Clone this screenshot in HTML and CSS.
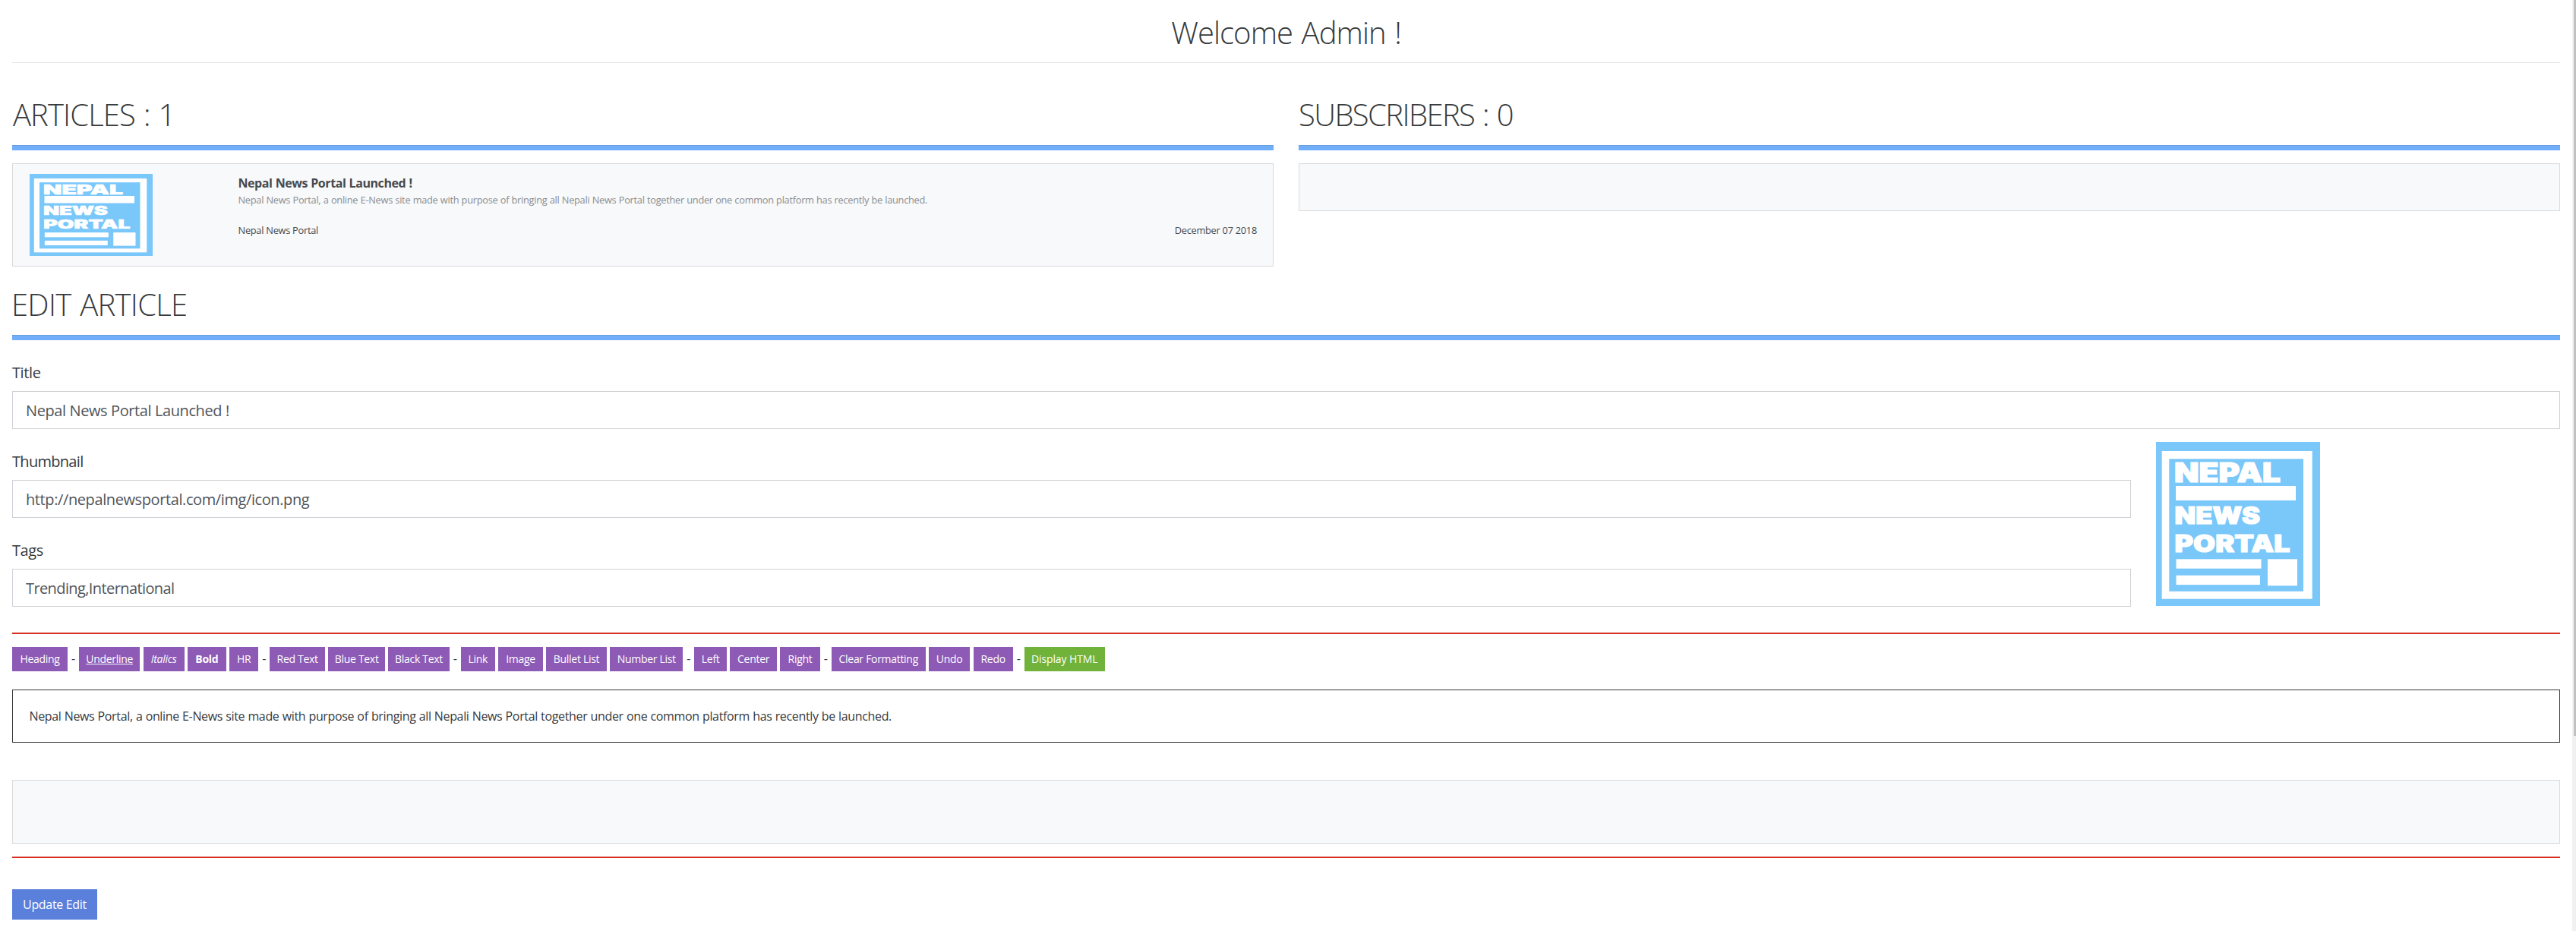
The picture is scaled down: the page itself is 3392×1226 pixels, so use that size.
FILE: index.html
```html
<!DOCTYPE html>
<html lang="en">
<head>
<meta charset="utf-8">
<title>Admin</title>
<link rel="stylesheet" href="styles.css">
</head>
<body>
<main class="page">
  <h1 class="welcome">Welcome Admin !</h1>

  <div class="columns">
    <section>
      <h2 class="heading heading-articles">ARTICLES : 1</h2>
      <hr class="bar">
      <article class="card article">
        <svg class="article-logo" viewBox="0 0 216 216" preserveAspectRatio="none">
          <rect width="216" height="216" fill="#7ac7fa"/>
          <rect x="7.7" y="12" width="198" height="194.7" fill="#fff"/>
          <rect x="17.3" y="22.3" width="176.7" height="174.4" fill="#7ac7fa"/>
          <g fill="#fff">
            <rect x="26" y="58" width="158" height="19"/>
            <rect x="26.5" y="154.3" width="112" height="12.4"/>
            <rect x="26.5" y="175.7" width="110.5" height="12.4"/>
            <rect x="147" y="154.3" width="39" height="35"/>
          </g>
          <g class="logo-text">
            <text x="24" y="53.4" font-size="35.4" textLength="140" lengthAdjust="spacingAndGlyphs">NEPAL</text>
            <text x="24.5" y="108" font-size="31" textLength="112.5" lengthAdjust="spacingAndGlyphs">NEWS</text>
            <text x="24.5" y="144.6" font-size="31" textLength="152" lengthAdjust="spacingAndGlyphs">PORTAL</text>
          </g>
        </svg>
        <div class="article-body">
          <h3 class="article-title">Nepal News Portal Launched !</h3>
          <p class="article-text">Nepal News Portal, a online E-News site made with purpose of bringing all Nepali News Portal together under one common platform has recently be launched.</p>
          <div class="article-meta"><span>Nepal News Portal</span><span>December 07 2018</span></div>
        </div>
      </article>
    </section>
    <section>
      <h2 class="heading heading-subscribers">SUBSCRIBERS : 0</h2>
      <hr class="bar">
      <div class="card subscribers"></div>
    </section>
  </div>

  <h2 class="heading heading-edit">EDIT ARTICLE</h2>
  <hr class="bar">

  <div class="field">
    <label class="label" for="title">Title</label>
    <input class="input" id="title" value="Nepal News Portal Launched !">
  </div>
  <div class="media-row">
    <div>
      <div class="field">
        <label class="label label-thumb" for="thumb">Thumbnail</label>
        <input class="input" id="thumb" value="http://nepalnewsportal.com/img/icon.png">
      </div>
      <div class="field">
        <label class="label" for="tags">Tags</label>
        <input class="input input-tags" id="tags" value="Trending,International">
      </div>
    </div>
    <svg class="preview" viewBox="0 0 216 216">
      <rect width="216" height="216" fill="#7ac7fa"/>
      <rect x="7.7" y="12" width="198" height="194.7" fill="#fff"/>
      <rect x="17.3" y="22.3" width="176.7" height="174.4" fill="#7ac7fa"/>
      <g fill="#fff">
        <rect x="26" y="58" width="158" height="19"/>
        <rect x="26.5" y="154.3" width="112" height="12.4"/>
        <rect x="26.5" y="175.7" width="110.5" height="12.4"/>
        <rect x="147" y="154.3" width="39" height="35"/>
      </g>
      <g class="logo-text">
        <text x="24" y="53.4" font-size="35.4" textLength="140" lengthAdjust="spacingAndGlyphs">NEPAL</text>
        <text x="24.5" y="108" font-size="31" textLength="112.5" lengthAdjust="spacingAndGlyphs">NEWS</text>
        <text x="24.5" y="144.6" font-size="31" textLength="152" lengthAdjust="spacingAndGlyphs">PORTAL</text>
      </g>
    </svg>
  </div>

  <hr class="rule rule-top">
  <div class="toolbar">
    <a class="tool heading-btn">Heading</a>
    <span class="dash">-</span>
    <a class="tool underline-btn">Underline</a>
    <a class="tool italics-btn">Italics</a>
    <a class="tool bold-btn">Bold</a>
    <a class="tool hr-btn">HR</a>
    <span class="dash">-</span>
    <a class="tool red-btn">Red Text</a>
    <a class="tool blue-btn">Blue Text</a>
    <a class="tool black-btn">Black Text</a>
    <span class="dash">-</span>
    <a class="tool link-btn">Link</a>
    <a class="tool image-btn">Image</a>
    <a class="tool bullet-btn">Bullet List</a>
    <a class="tool number-btn">Number List</a>
    <span class="dash">-</span>
    <a class="tool left-btn">Left</a>
    <a class="tool center-btn">Center</a>
    <a class="tool right-btn">Right</a>
    <span class="dash">-</span>
    <a class="tool clear-btn">Clear Formatting</a>
    <a class="tool undo-btn">Undo</a>
    <a class="tool redo-btn">Redo</a>
    <span class="dash">-</span>
    <a class="tool html-btn">Display HTML</a>
  </div>
  <div class="editor">Nepal News Portal, a online E-News site made with purpose of bringing all Nepali News Portal together under one common platform has recently be launched.</div>
  <div class="card output"></div>
  <hr class="rule rule-bottom">
  <button class="update">Update Edit</button>
</main>
<div class="scrollbar"><div class="thumb"></div></div>
</body>
</html>
```
FILE: styles.css
```css
* { box-sizing: border-box; }
html, body { height: 100%; overflow: hidden; }
body {
  margin: 0;
  background: #fff;
  color: #373a3c;
  font-family: "Open Sans", "Noto Sans", sans-serif;
  font-size: 16px;
  line-height: 22px;
}
h1, h2, h3, p, hr { margin: 0; border: 0; }

.page { padding: 0 21px 0 16px; }

.welcome {
  padding: 18px 0 15px;
  border-bottom: 1px solid #e4e5e5;
  font-size: 40px;
  font-weight: 300;
  line-height: 49px;
  letter-spacing: -0.93px;
  word-spacing: 2px;
  text-align: center;
}

.heading {
  margin-bottom: 16px;
  font-size: 40px;
  font-weight: 300;
  line-height: 49px;
  white-space: nowrap;
}
.heading-articles { letter-spacing: -0.9px; word-spacing: 1.5px; text-indent: 1px; }
.heading-subscribers { letter-spacing: -1.6px; word-spacing: 2px; }
.heading-edit { margin-top: 25px; letter-spacing: -0.72px; word-spacing: 2px; text-indent: -1px; }

.bar { height: 7px; background: #70aef9; border-top: 1px solid #659ddf; }

.columns {
  display: grid;
  grid-template-columns: 1661px 1661px;
  gap: 33px;
  align-items: start;
  margin-top: 43px;
}

.card { background: #f8f9fb; border: 1px solid #d9dadc; }
.columns .card { margin-top: 17px; }
.subscribers { height: 63px; }

.article { display: flex; height: 136px; padding: 13px 21px 0 22px; }
.article-logo { flex: none; width: 162px; height: 108px; }
.article-body { flex: 1; margin-left: 112.5px; padding-top: 1px; }
.article-title { font-size: 16px; font-weight: 700; line-height: 22px; letter-spacing: -0.42px; word-spacing: 0.4px; color: #46494c; }
.article-text { margin-top: 2px; font-size: 12.8px; line-height: 18px; letter-spacing: -0.28px; word-spacing: 0.3px; color: #8a8d90; }
.article-meta {
  display: flex;
  justify-content: space-between;
  margin-top: 22px;
  font-size: 12.8px;
  line-height: 18px;
  letter-spacing: -0.26px;
  color: #46494c;
}

.field { padding-top: 29px; }
.label { display: block; margin-bottom: 11px; font-size: 20px; line-height: 27px; letter-spacing: -0.4px; }
.label-thumb { letter-spacing: -0.7px; }
.input {
  display: block;
  width: 100%;
  height: 50px;
  padding: 11px 17px 10px;
  border: 1px solid #ced1d5;
  border-radius: 0;
  background: #fff;
  color: #505459;
  font: 20px/27px "Open Sans", "Noto Sans", sans-serif;
  letter-spacing: -0.4px;
}
.input-tags { letter-spacing: -0.6px; }

.media-row { display: flex; gap: 33px; align-items: flex-start; }
.media-row > div { width: 2790px; }
.preview { flex: none; width: 216px; height: 216px; margin-top: 17px; }
.logo-text {
  fill: #fff;
  stroke: #fff;
  stroke-width: 1.2px;
  font-family: Inter, "Liberation Sans", sans-serif;
  font-weight: 900;
}

.rule { height: 2px; background: #d62e20; }
.rule-top { margin-top: 34px; }
.rule-bottom { margin-top: 17px; }

.toolbar { display: flex; gap: 4.4px; margin-top: 17px; }
.tool {
  flex: none;
  height: 32px;
  padding-top: 6px;
  background: #8d5ab5;
  color: #fff;
  font-size: 14px;
  line-height: 19px;
  letter-spacing: -0.3px;
  text-align: center;
  white-space: nowrap;
}
.dash { flex: none; width: 6.4px; padding-top: 4px; line-height: 22px; text-align: center; }
.heading-btn { width: 73px; }
.underline-btn { width: 80px; text-decoration: underline; }
.italics-btn { width: 54.2px; font-style: italic; }
.bold-btn { width: 50.4px; font-weight: 700; }
.hr-btn { width: 38.4px; }
.red-btn { width: 72.4px; }
.blue-btn { width: 74.8px; }
.black-btn { width: 80.2px; }
.link-btn { width: 45px; }
.image-btn { width: 58.6px; }
.bullet-btn { width: 79.7px; }
.number-btn { width: 96px; }
.left-btn { width: 42.5px; }
.center-btn { width: 61.6px; }
.right-btn { width: 52.4px; }
.clear-btn { width: 123.8px; }
.undo-btn { width: 54.2px; }
.redo-btn { width: 52px; }
.html-btn { width: 105.8px; background: #70b23a; letter-spacing: -0.1px; }

.editor {
  margin-top: 24px;
  padding: 23px 21.5px;
  border: 1px solid #37393b;
  letter-spacing: -0.35px;
  word-spacing: 0.4px;
}
.output { height: 84px; margin-top: 49px; }

.update {
  display: block;
  width: 112px;
  height: 40px;
  margin-top: 41px;
  padding: 9px 0;
  border: 0;
  background: #5a80dc;
  color: #fff;
  font: 16px/22px "Open Sans", "Noto Sans", sans-serif;
  letter-spacing: -0.32px;
  white-space: nowrap;
}

/* Page scrollbar, drawn over the right edge of the window */
.scrollbar { position: fixed; top: 0; right: 0; width: 5px; height: 100%; padding-left: 2px; background: #f1f1f1; }
.thumb { height: 969px; background: #c1c1c1; }
```
